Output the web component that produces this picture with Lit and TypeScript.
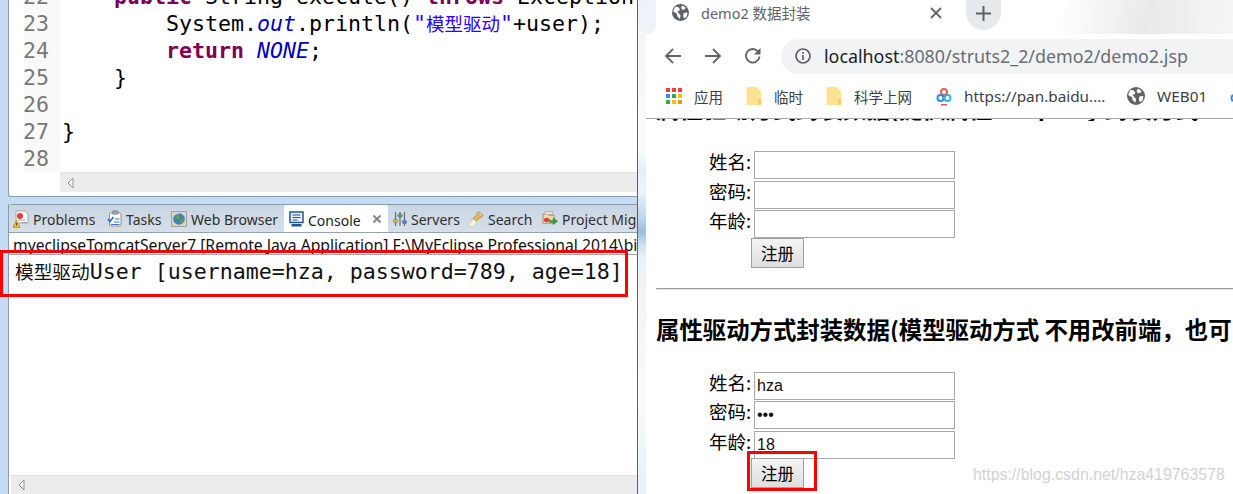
import { LitElement, html, css, svg } from "lit";
import { customElement } from "lit/decorators.js";

const globe = (s: number) => html`<svg width=${s} height=${s} viewBox="0 0 16 16"><circle cx="8" cy="8" r="8" fill="#5f6368"/><path d="M3 2.500l3 .5 1.500 2-1 1.500-1.500 .5L6.500 9 8 10.500 7.500 14 5 11.500 4.500 9 1 7zM10 1.500l3 2-1 1.500-2.500 .5-1-2.500zM11 8.500l3.500-.5L14 11.500 12 13.500 10.500 12z" fill="#fff"/></svg>`;
const folder = html`<svg width="16" height="20" viewBox="0 0 16 20"><path d="M1.500 1h9.500l4 4v13a1 1 0 0 1-1 1H1.500a1 1 0 0 1-1-1V2a1 1 0 0 1 1-1z" fill="#fde293"/><path d="M12 13h3.500v5a1 1 0 0 1-1 1H12z" fill="#f6cf6b"/></svg>`;
const appsGrid = html`<svg width="16" height="16" viewBox="0 0 16 16">${[0, 6, 12].map((y, r) =>
  [0, 6, 12].map((x, c) => svg`<rect x=${x} y=${y} width="4" height="4" fill=${[["#ea4335", "#ea4335", "#ea4335"], ["#4285f4", "#34a853", "#fbbc04"], ["#34a853", "#fbbc04", "#f29900"]][r][c]}/>`)
)}</svg>`;
const baidu = html`<svg width="16" height="20" viewBox="0 0 16 20"><g fill="none" stroke-width="2"><circle cx="8" cy="6" r="3" stroke="#e85d4c"/><circle cx="4.500" cy="12" r="3" stroke="#2f8ae6"/><circle cx="11.500" cy="12" r="3" stroke="#31b0e8"/></g><rect x="5" y="18" width="6" height="1.500" fill="#e8506a"/></svg>`;

const tabIcons: Record<string, unknown> = {
  problems: html`<svg width="16" height="18" viewBox="0 0 16 18"><path d="M3 1h9l3 3v9H3z" fill="#f7f7f7" stroke="#9a9a9a" stroke-width=".8"/><circle cx="7" cy="6" r="3" fill="#e0403a"/><path d="M5 10h7M9 12.500h5" stroke="#a8a8a8"/><path d="M0 17.500L3.500 10.500 7 17.500z" fill="#f6c233" stroke="#a87a10" stroke-width=".7"/><path d="M3.500 13v2.500" stroke="#5a3d00"/></svg>`,
  tasks: html`<svg width="15" height="17" viewBox="0 0 15 17"><rect x="2.500" y="3" width="11.500" height="13" rx="1" fill="#fbfbfb" stroke="#a08f72"/><rect x="5.500" y=".8" width="5.500" height="3.500" rx="1" fill="#9aa6b5" stroke="#6c7684" stroke-width=".6"/><path d="M.8 9l2.200 2.500L6.500 7" fill="none" stroke="#1f6fd0" stroke-width="1.700"/><path d="M8 9h4.500M7 12h5.500M4 14.500h8.500" stroke="#3f79b8"/></svg>`,
  web: html`<svg width="16" height="16" viewBox="0 0 16 16"><rect x=".5" y=".5" width="15" height="15" fill="#d9d6c6" stroke="#a9a58e"/><circle cx="8" cy="8" r="5.800" fill="#3f82b8"/><path d="M5 3.500l3.500 .5.5 3-2.500 1.500-1-1.500-2 0zM9 8.500l3.500-1 .5 2.500-3 3z" fill="#6aa03f"/><path d="M4 4a5 5 0 0 1 4-1.500" stroke="#bcd8ee" fill="none"/></svg>`,
  console: html`<svg width="15" height="16" viewBox="0 0 15 16"><rect x="1" y="1" width="13" height="10.500" fill="#e9f1fb" stroke="#23558f" stroke-width="1.500"/><path d="M3.500 4h8M3.500 6.500h8M3.500 9h5" stroke="#23558f"/><rect x="2.500" y="13" width="10" height="2.500" fill="#23558f"/></svg>`,
  servers: html`<svg width="14" height="16" viewBox="0 0 14 16"><path d="M2.500 1v14M7 1v14M11.500 1v14" stroke="#5f6f80" stroke-width="1.200"/><ellipse cx="2.500" cy="10" rx="2.300" ry="1.800" fill="#d9c32e" stroke="#5f6f80" stroke-width=".6"/><ellipse cx="7" cy="4.500" rx="2.300" ry="1.800" fill="#5aa646" stroke="#5f6f80" stroke-width=".6"/><ellipse cx="11.500" cy="11" rx="2.300" ry="1.800" fill="#4a86cf" stroke="#5f6f80" stroke-width=".6"/></svg>`,
  search: html`<svg width="16" height="16" viewBox="0 0 17 17"><path d="M11.500 1l4.500 3.500-1.500 2-2 .5-5 5-3-3 5-5 .5-2z" fill="#e8b64c" stroke="#9a7a36" stroke-width=".7"/><path d="M5.500 8.500l3.500 3.500-4 4.500L.5 16z" fill="#fdf6dc" stroke="#cfc7a8" stroke-width=".6"/><path d="M12 2.500l2.500 2" stroke="#fff3c4"/></svg>`,
  project: html`<svg width="16" height="15" viewBox="0 0 17 16"><path d="M1 3h5l1.500 1.500H13V13H1z" fill="#f0dfa4" stroke="#8d7d4a" stroke-width=".8"/><rect x="3" y=".8" width="8" height="3" fill="#e4e4e4" stroke="#9a9a9a" stroke-width=".6"/><ellipse cx="5" cy="9.500" rx="3" ry="2.300" fill="#d8404a"/><path d="M8 10h4V7.500l4.500 3.500-4.500 3.500V12H8z" fill="#35a043" stroke="#1f6f2a" stroke-width=".5"/></svg>`,
};

const tabs = [
  { id: "problems", label: "Problems", w: 94, pad: 1 },
  { id: "tasks", label: "Tasks", w: 64, pad: 1 },
  { id: "web", label: "Web Browser", w: 114, pad: 1 },
  { id: "console", label: "Console", w: 104, pad: 5, active: true },
  { id: "servers", label: "Servers", w: 79, pad: 5 },
  { id: "search", label: "Search", w: 74, pad: 1 },
  { id: "project", label: "Project Migration", w: 150, pad: 1 },
];

const marks = [
  { icon: appsGrid, label: "应用", w: 80 },
  { icon: folder, label: "临时", w: 80 },
  { icon: folder, label: "科学上网", w: 110 },
  { icon: baidu, label: "https://pan.baidu....", w: 191 },
  { icon: globe(18), label: "WEB01", w: 103 },
  { icon: baidu, label: "", w: 20 },
];

@customElement("app-root")
class AppRoot extends LitElement {
  static styles = css`
    :host { display: block; width: 1233px; height: 494px; overflow: hidden; position: relative; background: #fff; }
    .page { display: flex; height: 494px; }
    .ide { width: 638px; flex: none; background: #c5dcf5; padding-left: 8px; box-sizing: border-box; display: flex; flex-direction: column; gap: 7px; border-right: 1px solid #5f5f5f; }
    .editor { height: 197px; flex: none; background: #fff; border: 1px solid #8a9bb0; border-top: 0; border-right: 0; border-radius: 0 0 0 3px; box-sizing: border-box; padding-bottom: 4px; display: flex; flex-direction: column; overflow: hidden; }
    .code { flex: 1; overflow: hidden; display: flex; min-height: 0; }
    .gutter { width: 36px; margin-left: 15px; flex: none; background: #f9f9f9; color: #787878; box-sizing: border-box; }
    .src { flex: 1; color: #000; white-space: pre; padding-left: 2px; }
    .gutter, .src { font: 21.600px/27px "DejaVu Sans Mono", monospace; margin-top: -17px; height: 220px; }
    .gutter div { width: 28px; margin-left: -1px; }
    .src, .console-out { font-family: "DejaVu Sans Mono", "Noto Sans CJK SC", monospace; }
    .kw { color: #7f0055; font-weight: bold; }
    .fld { color: #0000c0; font-style: italic; }
    .str { color: #2a00ff; }
    .cjk { font-family: "Noto Sans CJK SC", sans-serif; font-size: 18.500px; }
    .hbar { height: 20px; flex: none; background: #ececec; border-top: 1px solid #e2e2e2; box-sizing: border-box; display: flex; align-items: center; padding-left: 7px; color: #8d8d8d; }
    .hbar svg { display: block; }
    .hbar.e { margin-left: 51px; }
    .hbar.c { margin-left: 2px; height: 19px; }
    .view { flex: 1; background: #fff; min-height: 0; display: flex; flex-direction: column; border-left: 1px solid #8a9bb0; }
    .tabbar { height: 29px; flex: none; background: linear-gradient(#c8d5e3, #d7e0e9); border-top: 1px solid #8a9bb0; border-bottom: 1px solid #93a3b6; box-sizing: border-box; display: flex; overflow: hidden; padding-left: 3px; border-radius: 3px 0 0 0; }
    .tab { flex: none; box-sizing: border-box; display: flex; align-items: center; gap: 4px; font: 14px "Noto Sans", sans-serif; color: #2f2f2f; white-space: nowrap; }
    .tab span { position: relative; top: 1px; }
    .tab svg { flex: none; }
    .tab.active { background: #fff; color: #222; gap: 4px; border-radius: 2px 3px 0 0; height: 28px; }
    .tab .x { flex: none; margin-left: 7px; }
    .desc { height: 22px; flex: none; font: 15.700px/24px "Noto Sans", sans-serif; color: #111; padding-left: 4px; white-space: nowrap; overflow: hidden; border-bottom: 1px solid #a8a8a8; box-sizing: border-box; }
    .console-out { flex: 1; padding: 2px 0 0 6px; font-size: 21.600px; line-height: 27px; white-space: pre; color: #111; }
    .console-out .cjk { font-size: 18.700px; }

    .browser { flex: 1; min-width: 0; display: flex; flex-direction: column; overflow: hidden; padding-left: 8px; background: linear-gradient(#eaf1f9 0, #f6f6f6 40px, #fafafa 150px, #dff0fa 172px, #eef6fb 190px, #b8d2ec 220px, #9fbcdc 232px, #cfe0f0 245px, #e8f2f9 258px, #f4f4f4 290px, #fafafa 400px, #e4f4fa 480px, #e4f4fa 494px); }
    .strip { height: 34px; flex: none; background: linear-gradient(100deg, #fdfdfd 0%, #fff 70%, #e9e9e9 85%, #f6f6f6 100%); display: flex; align-items: flex-start; }
    .strip .edge { width: 10px; height: 34px; flex: none; background: #eef3f9; border-radius: 0 0 8px 0; }
    .ctab { width: 301px; height: 34px; flex: none; background: #fff; display: flex; align-items: center; padding: 0 0 9px 16px; box-sizing: border-box; gap: 12px; font: 14.500px "Noto Sans", "Noto Sans CJK SC", sans-serif; color: #5f6368; }
    .ctab .title { width: 217px; }
    .newtab { width: 35px; height: 30px; flex: none; margin-left: 9px; background: #e6e9ec; border-radius: 0 0 18px 18px; display: flex; align-items: center; justify-content: center; padding-bottom: 4px; box-sizing: border-box; }
    .toolbar { height: 44px; flex: none; display: flex; align-items: center; background: #fff; padding-left: 18px; }
    .toolbar .btn { width: 18px; height: 18px; margin-right: 22px; flex: none; }
    .pill { flex: 1; height: 35px; background: #f1f3f4; margin-left: -3px; border-radius: 18px 0 0 18px; display: flex; align-items: center; padding-left: 14px; gap: 13px; font: 17.850px "Noto Sans", sans-serif; color: #6a6e73; white-space: nowrap; }
    .pill b { font-weight: normal; color: #202124; }
    .marks { height: 41px; flex: none; display: flex; align-items: center; padding: 0 0 4px 20px; border-bottom: 1px solid #aaa; box-sizing: border-box; background: #fff; overflow: hidden; }
    .mark { flex: none; display: flex; align-items: center; gap: 12px; font: 15.300px "Noto Sans", "Noto Sans CJK SC", sans-serif; color: #3c4043; white-space: nowrap; }
    .mark svg { flex: none; }
    .mark .zh { font-size: 14.500px; }
    .body { flex: 1; min-height: 0; overflow: hidden; padding: 0 0 0 10px; background: #fff; }
    .sect { white-space: nowrap; }
    .sect.first { margin-top: -24px; }
    h3 { margin: 0; font: bold 23.400px/26px "Noto Sans CJK SC", "Liberation Sans", sans-serif; color: #000; height: 26px; overflow: hidden; white-space: nowrap; }
    form { margin: 30px 0 0 53px; display: grid; grid-template-columns: 45px 201px; row-gap: 1.500px; align-items: center; justify-content: start; }
    label { font: 18.500px/28px "Noto Sans CJK SC", sans-serif; color: #000; white-space: nowrap; transform: translateY(-4px); }
    input { width: 201px; height: 28px; box-sizing: border-box; border: 1px solid #a9a9a9; margin: 0; padding: 0 2px; font: 16px "Liberation Sans", sans-serif; color: #111; background: #fff; outline: 0; }
    button { grid-column: 1 / 3; margin: -2px 0 0 42px; justify-self: start; width: 53px; height: 30px; border: 1px solid #a0a0a0; background: linear-gradient(#f4f4f4, #dedede); font: 16.500px "Noto Sans CJK SC", sans-serif; color: #000; padding: 0; }
    hr { height: 1px; margin: 20px 0 26px; border: 0; border-top: 1px solid #9a9a9a; border-left: 1px solid #ccc; background: #e6e6e6; }

    .redbox { position: absolute; border: 3.500px solid #f00; box-sizing: border-box; pointer-events: none; }
    .redbox.out { left: 0; top: 250px; width: 628px; height: 47px; }
    .redbox.btn { left: 747px; top: 451px; width: 70px; height: 40px; }
    .mark-w { position: absolute; left: 973px; top: 466px; font: 15.900px "Liberation Sans", sans-serif; color: #d2d2d2; white-space: nowrap; }
  `;

  renderForm(name = "", pwd = "", age = "") {
    return html`<form @submit=${(e: Event) => e.preventDefault()}>
      <label>姓名:</label><input .value=${name} />
      <label>密码:</label><input type="password" .value=${pwd} />
      <label>年龄:</label><input .value=${age} />
      <button type="button">注册</button>
    </form>`;
  }

  render() {
    const arrow = html`<svg width="8" height="12" viewBox="0 0 8 12"><path d="M6 1v10L1 6z" fill="#fff" stroke="#8d8d8d"/></svg>`;
    return html`<div class="page">
      <section class="ide">
        <div class="editor">
          <div class="code">
            <div class="gutter">${[22, 23, 24, 25, 26, 27, 28].map((n) => html`<div>${n}</div>`)}</div>
            <div class="src"><div>    <span class="kw">public</span> String execute() <span class="kw">throws</span> Exception {</div><div>        System.<span class="fld">out</span>.println(<span class="str">"<span class="cjk">模型驱动</span>"</span>+user);</div><div>        <span class="kw">return</span> <span class="fld">NONE</span>;</div><div>    }</div><div> </div><div>}</div><div> </div></div>
          </div>
          <div class="hbar e">${arrow}</div>
        </div>
        <div class="view">
          <div class="tabbar">
            ${tabs.map((t) => html`<div class="tab ${t.active ? "active" : ""}" style="width:${t.w}px;padding-left:${t.pad}px">${tabIcons[t.id]}<span>${t.label}</span>${t.active ? html`<svg class="x" width="10" height="10" viewBox="0 0 10 10"><path d="M1.500 1.500l7 7M8.500 1.500l-7 7" stroke="#8a8a8a" stroke-width="2.200"/></svg>` : ""}</div>`)}
          </div>
          <div class="desc">myeclipseTomcatServer7 [Remote Java Application] F:\\MyEclipse Professional 2014\\bin\\javaw.exe</div>
          <div class="console-out"><span class="cjk">模型驱动</span>User [username=hza, password=789, age=18]</div>
          <div class="hbar c">${arrow}</div>
        </div>
      </section>
      <section class="browser">
        <div class="strip">
          <div class="edge"></div>
          <div class="ctab">${globe(17)}<span class="title">demo2 数据封装</span>
            <svg width="12" height="12" viewBox="0 0 12 12"><path d="M1 1l10 10M11 1L1 11" stroke="#5f6368" stroke-width="1.800"/></svg></div>
          <div class="newtab"><svg width="15" height="15" viewBox="0 0 15 15"><path d="M7.500 0v15M0 7.500h15" stroke="#5f6368" stroke-width="2"/></svg></div>
        </div>
        <div class="toolbar">
          <svg class="btn" viewBox="0 0 18 18"><path d="M17 9H2M9 2L2 9l7 7" fill="none" stroke="#5f6368" stroke-width="1.800"/></svg>
          <svg class="btn" viewBox="0 0 18 18"><path d="M1 9h15M9 2l7 7-7 7" fill="none" stroke="#5f6368" stroke-width="1.800"/></svg>
          <svg class="btn" viewBox="0 0 18 18"><path d="M15.500 9.500A6.800 6.800 0 1 1 13.800 4.200" fill="none" stroke="#5f6368" stroke-width="1.900"/><path d="M16.500 1v6.500H10z" fill="#5f6368"/></svg>
          <div class="pill">
            <svg width="16" height="16" viewBox="0 0 16 16"><circle cx="8" cy="8" r="7" fill="none" stroke="#5f6368" stroke-width="1.700"/><path d="M8 7v5M8 4v1.800" stroke="#5f6368" stroke-width="1.700"/></svg>
            <span><b>localhost</b>:8080/struts2_2/demo2/demo2.jsp</span>
          </div>
        </div>
        <div class="marks">
          ${marks.map((m) => html`<div class="mark" style="width:${m.w}px">${m.icon}<span class=${/[\u4e00-\u9fff]/.test(m.label) ? "zh" : ""}>${m.label}</span></div>`)}
        </div>
        <div class="body">
          <div class="sect first">
            <h3>属性驱动方式封装数据(提供属性 Property 封装方式上</h3>
            ${this.renderForm()}
          </div>
          <hr />
          <div class="sect">
            <h3>属性驱动方式封装数据(模型驱动方式 不用改前端，也可以封装)</h3>
            ${this.renderForm("hza", "789", "18")}
          </div>
        </div>
      </section>
      <div class="redbox out"></div>
      <div class="redbox btn"></div>
      <div class="mark-w">https://blog.csdn.net/hza419763578</div>
    </div>`;
  }
}
